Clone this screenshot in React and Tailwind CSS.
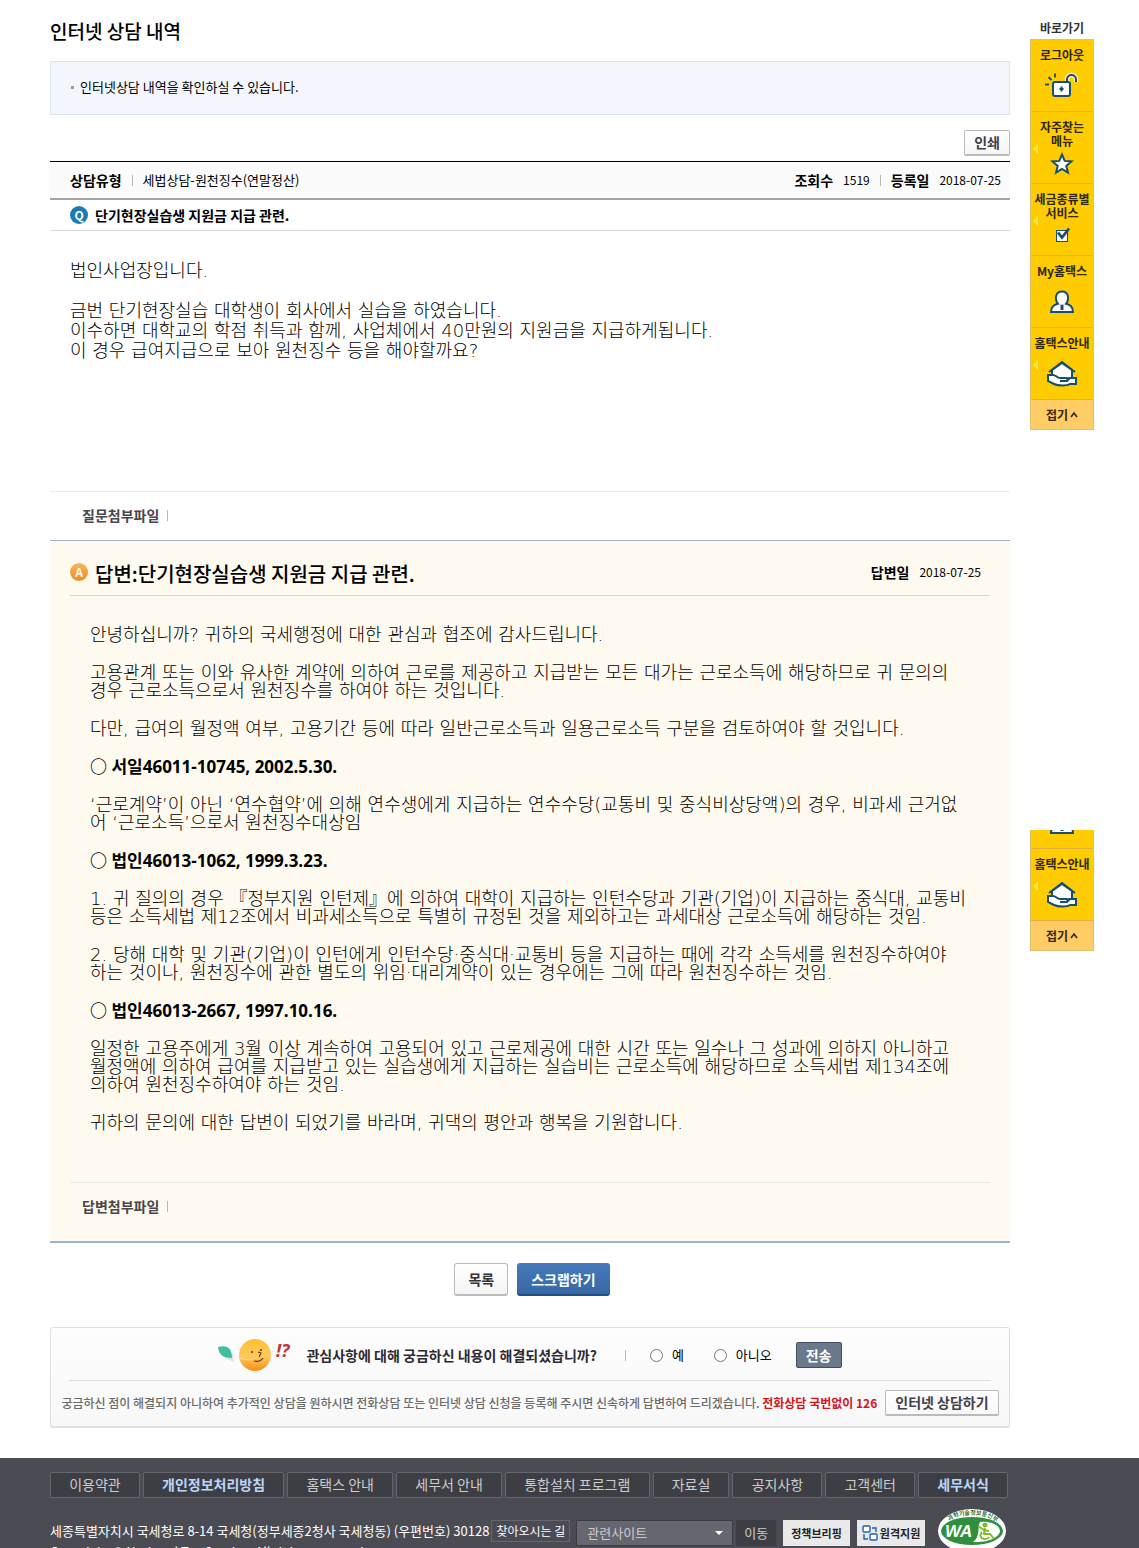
import React, { useState } from "react";

const footerLinks = [
  { label: "이용약관" },
  { label: "개인정보처리방침", strong: true },
  { label: "홈택스 안내" },
  { label: "세무서 안내" },
  { label: "통합설치 프로그램" },
  { label: "자료실" },
  { label: "공지사항" },
  { label: "고객센터" },
  { label: "세무서식", strong: true },
];

const LockIcon = () => (
  <svg width="34" height="26" viewBox="0 0 34 26" fill="none" stroke="#17506f" strokeWidth="2">
    <path d="M0 12.500h4M3.500 5l3 3M10 1.500v4" strokeWidth="1.800" />
    <path d="M22 11V7.500c0-6 9-6 9 0V10" stroke="#fff6c8" strokeWidth="4.500" />
    <path d="M22 11V7.500c0-6 9-6 9 0V10" />
    <rect x="8" y="10" width="17" height="14" rx="2" fill="#fff" />
    <path d="M16.500 14.500v5M14.500 17h4" />
  </svg>
);

const StarIcon = () => (
  <svg width="24" height="24" viewBox="0 0 24 24">
    <path
      d="M12 2.500l2.700 6.400 6.800.5-5.200 4.500 1.700 6.800-6-3.700-6 3.700 1.700-6.800L2.500 9.400l6.800-.5z"
      fill="#fff"
      stroke="#17506f"
      strokeWidth="2"
    />
  </svg>
);

const CheckIcon = () => (
  <svg width="18" height="18" viewBox="0 0 18 18">
    <rect x="3.500" y="3.500" width="11" height="11" fill="#fff" stroke="#17506f" />
    <path d="M5 5.500l4 5 7-9" fill="none" stroke="#17506f" strokeWidth="2.800" />
  </svg>
);

const UserIcon = () => (
  <svg width="26" height="26" viewBox="0 0 26 26" fill="#fff" stroke="#17506f" strokeWidth="2">
    <path d="M9 15.500c-4 1.500-7 3-7 8.500h22c0-5.500-3-7-7-8.500z" />
    <path d="M9.500 16.500C5 11 6.500 3.500 13 3.500S21 11 16.500 16.500" />
    <path d="M13 17v5" strokeWidth="3" />
  </svg>
);

const HouseIcon = () => (
  <svg width="32" height="28" viewBox="0 0 32 28" fill="#fff" stroke="#17506f" strokeWidth="2">
    <path d="M6 20V11l10-7 10 7v8z" />
    <path d="M3 13L16 3l13 10" fill="none" />
    <path d="M2 16h5c3 0 4 3 7 3h6c2 0 2 3 0 3h-6 7l3-3h6v6h-6c-3 2-12 2-16 0l-6-3z" />
  </svg>
);

const quickItems = [
  { lines: ["로그아웃"], icon: <LockIcon /> },
  { lines: ["자주찾는", "메뉴"], icon: <StarIcon />, arrow: true },
  { lines: ["세금종류별", "서비스"], icon: <CheckIcon />, arrow: true },
  { lines: ["My홈택스"], icon: <UserIcon /> },
  { lines: ["홈택스안내"], icon: <HouseIcon />, arrow: true },
];

const QuickMenu = ({ items }) => (
  <nav className="shrink-0 border border-[#dcc070] bg-[#fc0]">
    {items.map((item) => (
      <a
        key={item.lines[0]}
        href="#"
        className="relative flex h-18 flex-col items-center border-b border-[#e0b040] pt-2 pb-1 text-xs leading-[14px] font-bold whitespace-nowrap text-[#30270c]"
      >
        {item.lines.map((line) => (
          <span key={line}>{line}</span>
        ))}
        <span className="flex grow items-center justify-center">{item.icon}</span>
        {item.arrow && (
          <span className="absolute top-8 left-0.5 border-y-[5px] border-r-[5px] border-y-transparent border-r-[#ffe84d]" />
        )}
      </a>
    ))}
    <button
      type="button"
      className="flex h-[29px] w-full items-center justify-center gap-0.5 bg-[#fc6] text-xs font-bold text-[#30270c]"
    >
      접기
      <svg width="8" height="7" viewBox="0 0 8 7" fill="none" stroke="#30270c" strokeWidth="1.600">
        <path d="M1 6l3-4 3 4" />
      </svg>
    </button>
  </nav>
);

const Divider = () => <span className="h-[11px] w-px bg-[#b8b8b8]" />;

const Badge = ({ letter, className }) => (
  <span
    className={`flex size-[18px] shrink-0 items-center justify-center rounded-full text-xs font-bold text-white ${className}`}
  >
    {letter}
  </span>
);

const FaceIcon = () => (
  <svg width="76" height="36" viewBox="0 0 76 36">
    <defs>
      <linearGradient id="face" x1="0" y1="0" x2="0" y2="1">
        <stop offset="0" stopColor="#ffc02e" />
        <stop offset="0.550" stopColor="#ffc95e" />
        <stop offset="1" stopColor="#fb8d14" />
      </linearGradient>
    </defs>
    <path d="M6 21l10 4-1-9z" fill="#e2e2e2" />
    <path d="M0 10c8-2 14 0 14 11C5 21 1 18 0 10z" fill="#41bfa1" />
    <circle cx="37" cy="18" r="16" fill="url(#face)" />
    <path d="M22 21c10 4 20 0 27-9" fill="none" stroke="#ffdc8e" />
    <path d="M40 15l3 1-2 4M36 24c4 1 7 0 9-3" fill="none" stroke="#5a3a10" strokeWidth="1.200" />
    <circle cx="34" cy="15" r="1" fill="#5a3a10" />
    <circle cx="43" cy="13" r="1" fill="#5a3a10" />
    <text x="58" y="20" fontSize="18" fontWeight="700" fontStyle="italic" fill="#c83236" fontFamily="Open Sans, sans-serif">
      !?
    </text>
  </svg>
);

const RemoteIcon = () => (
  <svg width="16" height="16" viewBox="0 0 16 16" fill="#fff" stroke="#1f5fae" strokeWidth="1.400">
    <rect x="1" y="1" width="7" height="6" rx="1" />
    <rect x="8" y="9" width="7" height="6" rx="1" />
    <path d="M10 3h4v4M2 9v5h4" fill="none" />
  </svg>
);

const WaLogo = () => (
  <svg width="70" height="46" viewBox="0 0 70 46" fontFamily="Noto Sans CJK KR, sans-serif" fontWeight="700">
    <defs>
      <path id="waTop" d="M10 14C20 3 50 3 60 14" />
    </defs>
    <ellipse cx="35" cy="22" rx="34" ry="22" fill="#fff" />
    <ellipse cx="35" cy="22" rx="31" ry="14" fill="#2f8f3c" />
    <path d="M36 33c8-6 4-15 7-20 10-1 20 3 20 9s-12 12-27 11z" fill="#fff" />
    <text fontSize="6" fill="#2c6b35">
      <textPath href="#waTop" startOffset="3">
        과학기술정보통신부
      </textPath>
    </text>
    <text x="8" y="28" fontSize="17" fontStyle="italic" fill="#fff" fontFamily="Liberation Sans, sans-serif">
      WA
    </text>
    <g fill="none" stroke="#7fba2e" strokeWidth="2">
      <circle cx="48" cy="16" r="1.500" fill="#7fba2e" />
      <path d="M48 19l-1 6h6l4 5M41 17l6 4 5 1" />
      <path d="M45 23c-5 5 3 10 7 5" />
    </g>
  </svg>
);

const Heading = ({ children }) => (
  <h3 className="font-['Open_Sans','Noto_Sans_CJK_KR',sans-serif] text-[17px] leading-[18px] font-bold">{children}</h3>
);

export default function App() {
  const [solved, setSolved] = useState("");

  return (
    <div className="bg-white font-['Noto_Sans_CJK_KR',sans-serif] text-[13px] leading-5 text-black">
      <div className="flex gap-5 pr-[45px] pl-[50px]">
        <main className="min-w-0 grow pt-[18px]">
          <h1 className="text-[19px] leading-[26px] font-medium">인터넷 상담 내역</h1>

          <div className="mt-[17px] flex h-[54px] items-center gap-1.5 border border-[#dde6ee] bg-[#f3f7fd] px-5 pb-0.5">
            <span className="size-[3px] bg-[#9a9a9a]" />
            <p>인터넷상담 내역을 확인하실 수 있습니다.</p>
          </div>

          <div className="mt-[15px] flex justify-end">
            <button
              type="button"
              className="h-[26px] rounded-xs border border-b-2 border-[#bbb] bg-linear-to-b from-white to-[#f6f6f6] px-[9px] pb-0.5 text-sm leading-5 font-bold text-[#443f4c]"
            >
              인쇄
            </button>
          </div>

          {/* 상담 정보 */}
          <div className="mt-[5px] flex h-[39px] items-center justify-between border-t border-b-2 border-t-black border-b-[#a5a5a5] bg-[#fbfbfb] pr-[9px] pl-5">
            <div className="flex items-center gap-[10px]">
              <strong className="text-sm">상담유형</strong>
              <Divider />
              <span>세법상담-원천징수(연말정산)</span>
            </div>
            <div className="flex items-center gap-[10px] text-xs">
              <strong className="text-sm">조회수</strong>
              <span>1519</span>
              <Divider />
              <strong className="text-sm">등록일</strong>
              <span>2018-07-25</span>
            </div>
          </div>

          <div className="flex h-[31px] items-center gap-[7px] border-b border-[#d8d8d8] pl-5">
            <Badge letter="Q" className="bg-[#1d7ab8]" />
            <h2 className="text-sm font-bold">단기현장실습생 지원금 지급 관련.</h2>
          </div>

          <div className="min-h-[260px] px-5 pt-[30px] font-['DejaVu_Sans','Noto_Sans_CJK_KR',sans-serif] text-lg leading-5 font-extralight">
            <p>법인사업장입니다.</p>
            <p className="mt-5">
              금번 단기현장실습 대학생이 회사에서 실습을 하였습니다.
              <br />
              이수하면 대학교의 학점 취득과 함께, 사업체에서 40만원의 지원금을 지급하게됩니다.
              <br />이 경우 급여지급으로 보아 원천징수 등을 해야할까요?
            </p>
          </div>

          <div className="flex h-[49px] items-center gap-2 border-t border-[#ebebeb] pb-0.5 pl-8">
            <strong className="text-sm text-[#49464e]">질문첨부파일</strong>
            <Divider />
          </div>

          {/* 답변 */}
          <section className="border-t border-b-2 border-[#9fb3c8] bg-[#fffaef] px-5">
            <div className="flex h-[55px] items-center justify-between border-b border-[#d9d6d0] pt-2">
              <div className="flex items-center gap-[7px]">
                <Badge letter="A" className="bg-linear-to-b from-[#f8b45c] to-[#f58a0c]" />
                <h2 className="pt-1 text-xl leading-6 font-medium">답변:단기현장실습생 지원금 지급 관련.</h2>
              </div>
              <div className="flex items-center gap-[10px] pr-[9px] text-xs">
                <strong className="text-sm">답변일</strong>
                <span>2018-07-25</span>
              </div>
            </div>

            <div className="flex flex-col gap-5 px-5 pt-[30px] pb-[50px] font-['DejaVu_Sans','Noto_Sans_CJK_KR',sans-serif] text-lg leading-[18px] font-extralight">
              <p>안녕하십니까? 귀하의 국세행정에 대한 관심과 협조에 감사드립니다.</p>
              <p>
                고용관계 또는 이와 유사한 계약에 의하여 근로를 제공하고 지급받는 모든 대가는 근로소득에 해당하므로 귀 문의의
                <br />
                경우 근로소득으로서 원천징수를 하여야 하는 것입니다.
              </p>
              <p>다만, 급여의 월정액 여부, 고용기간 등에 따라 일반근로소득과 일용근로소득 구분을 검토하여야 할 것입니다.</p>
              <Heading>○ 서일46011-10745, 2002.5.30.</Heading>
              <p>
                ‘근로계약’이 아닌 ‘연수협약’에 의해 연수생에게 지급하는 연수수당(교통비 및 중식비상당액)의 경우, 비과세 근거없
                <br />어 ‘근로소득’으로서 원천징수대상임
              </p>
              <Heading>○ 법인46013-1062, 1999.3.23.</Heading>
              <p>
                1. 귀 질의의 경우 『정부지원 인턴제』에 의하여 대학이 지급하는 인턴수당과 기관(기업)이 지급하는 중식대, 교통비
                <br />
                등은 소득세법 제12조에서 비과세소득으로 특별히 규정된 것을 제외하고는 과세대상 근로소득에 해당하는 것임.
              </p>
              <p>
                2. 당해 대학 및 기관(기업)이 인턴에게 인턴수당·중식대·교통비 등을 지급하는 때에 각각 소득세를 원천징수하여야
                <br />
                하는 것이나, 원천징수에 관한 별도의 위임·대리계약이 있는 경우에는 그에 따라 원천징수하는 것임.
              </p>
              <Heading>○ 법인46013-2667, 1997.10.16.</Heading>
              <p>
                일정한 고용주에게 3월 이상 계속하여 고용되어 있고 근로제공에 대한 시간 또는 일수나 그 성과에 의하지 아니하고
                <br />
                월정액에 의하여 급여를 지급받고 있는 실습생에게 지급하는 실습비는 근로소득에 해당하므로 소득세법 제134조에
                <br />
                의하여 원천징수하여야 하는 것임.
              </p>
              <p>귀하의 문의에 대한 답변이 되었기를 바라며, 귀댁의 평안과 행복을 기원합니다.</p>
            </div>

            <div className="flex h-[59px] items-center gap-2 border-t border-[#ece9e2] pb-3 pl-3">
              <strong className="text-sm text-[#49464e]">답변첨부파일</strong>
              <Divider />
            </div>
          </section>

          <div className="mt-5 flex justify-center gap-[9px] pl-1">
            <button
              type="button"
              className="h-[33px] rounded-[3px] border border-b-2 border-[#bbb] bg-linear-to-b from-white to-[#f4f4f4] px-[13px] text-sm font-bold text-[#333]"
            >
              목록
            </button>
            <button
              type="button"
              className="h-[33px] rounded-[3px] border-b-2 border-[#244f83] bg-linear-to-b from-[#467ab8] to-[#3768a6] px-[14px] text-sm font-bold text-white"
            >
              스크랩하기
            </button>
          </div>

          {/* 만족도 조사 */}
          <form
            className="mt-[31px] rounded-[3px] border border-b-2 border-[#e0e0e0] bg-linear-to-b from-[#fdfdfd] to-[#f8f8f8] px-[10px]"
            onSubmit={(e) => e.preventDefault()}
          >
            <div className="mx-2 flex h-[53px] items-center justify-center border-b border-[#ddd] pt-0.5">
              <FaceIcon />
              <strong className="ml-3 text-sm text-[#2e2a33]">관심사항에 대해 궁금하신 내용이 해결되셨습니까?</strong>
              <span className="mr-6 ml-7 h-[11px] w-px bg-[#b8b8b8]" />
              <label className="flex items-center gap-[9px]">
                <input type="radio" name="solved" checked={solved === "y"} onChange={() => setSolved("y")} />예
              </label>
              <label className="ml-[30px] flex items-center gap-[9px]">
                <input type="radio" name="solved" checked={solved === "n"} onChange={() => setSolved("n")} />
                아니오
              </label>
              <button
                type="submit"
                className="ml-6 h-[26px] rounded-xs border border-[#414d66] bg-[#6a798c] px-[9px] text-sm font-bold text-white"
              >
                전송
              </button>
            </div>
            <div className="flex h-[45px] items-center justify-center gap-2 pb-0.5 text-xs whitespace-nowrap">
              <p className="font-medium text-[#6b6b6b]">
                궁금하신 점이 해결되지 아니하여 추가적인 상담을 원하시면 전화상담 또는 인터넷 상담 신청을 등록해 주시면 신속하게 답변하여 드리겠습니다.{" "}
                <strong className="text-[#d6131b]">전화상담 국번없이 126</strong>
              </p>
              <button
                type="button"
                className="h-[26px] rounded-xs border border-b-2 border-[#bbb] bg-linear-to-b from-white to-[#f8f8f8] px-[9px] text-sm leading-5 font-bold text-[#443f4c]"
              >
                인터넷 상담하기
              </button>
            </div>
          </form>
        </main>

        <aside className="w-16 shrink-0 pt-5">
          <p className="h-[19px] text-center text-xs font-bold text-[#333]">바로가기</p>
          <QuickMenu items={quickItems} />
          {/* 하단 고정 메뉴는 끝부분만 보인다 */}
          <div className="mt-[400px] flex h-[121px] flex-col justify-end overflow-hidden">
            <QuickMenu items={quickItems.slice(3)} />
          </div>
        </aside>
      </div>

      <footer className="mt-[30px] bg-[#4b4b53] pt-[14px] pr-[131px] pb-8 pl-[50px] text-[#ccc]">
        <nav className="flex gap-[3px] whitespace-nowrap">
          {footerLinks.map((link) => (
            <a
              key={link.label}
              href="#"
              className={`flex h-[26px] grow items-center justify-center rounded-xs border border-[#66666e] bg-[#3d3d44] px-[18px] pb-0.5 text-sm ${
                link.strong ? "font-bold text-[#b9d7fb]" : ""
              }`}
            >
              {link.label}
            </a>
          ))}
        </nav>
        <div className="mt-[11px] flex items-start whitespace-nowrap">
          <div className="pt-[11px]">
            <div className="flex items-center gap-0.5">
              <address className="text-white not-italic">
                세종특별자치시 국세청로 8-14 국세청(정부세종2청사 국세청동) (우편번호) 30128
              </address>
              <a href="#" className="border border-[#66666e] px-1 text-xs leading-5 text-white">
                찾아오시는 길
              </a>
            </div>
            <p className="text-white">Copyright © National Tax Service. All rights reserved.</p>
          </div>
          <div className="flex pt-[11px] pl-1.5">
            <div className="relative">
              <select
                aria-label="관련사이트"
                className="block h-[26px] w-[157px] appearance-none border border-[#3b3b42] bg-[#666670] pl-[10px] text-[#ccc]"
              >
                <option>관련사이트</option>
              </select>
              <span className="pointer-events-none absolute top-[11px] right-[10px] border-x-4 border-t-4 border-x-transparent border-t-white" />
            </div>
            <button type="button" className="ml-[3px] h-[26px] bg-[#3d3d44] px-2">
              이동
            </button>
            <a href="#" className="ml-[7px] flex h-[26px] items-center bg-[#e9e9e9] px-2 text-[11px] font-bold text-[#222]">
              정책브리핑
            </a>
            <a href="#" className="ml-[7px] flex h-[26px] items-center gap-0.5 bg-[#e9e9e9] px-[5px] text-[11px] font-bold text-[#222]">
              <RemoteIcon />
              원격지원
            </a>
          </div>
          <div className="ml-3">
            <WaLogo />
          </div>
        </div>
      </footer>
    </div>
  );
}
